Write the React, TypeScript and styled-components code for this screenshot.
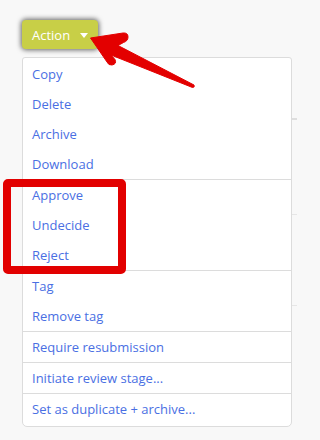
import React from "react";
import styled, { createGlobalStyle } from "styled-components";

const Global = createGlobalStyle`
  html, body { margin: 0; padding: 0; background: #f8f8f8; }
  body { font-family: "Open Sans", "Liberation Sans", sans-serif; }
  * { box-sizing: border-box; }
`;

const Page = styled.div`
  position: relative;
  width: 297px;
  height: 440px;
  overflow: hidden;
  background: #f8f8f8;
`;

const Toolbar = styled.div`
  display: flex;
  padding: 20px 0 0 22px;
`;

const DropdownWrap = styled.div`
  position: relative;
`;

const ActionButton = styled.button`
  display: flex;
  align-items: center;
  gap: 10px;
  height: 29px;
  width: 76px;
  padding: 0 0 0 10px;
  border: none;
  border-radius: 4px;
  background: #c8cf47;
  color: #ffffff;
  font-family: "Open Sans", "Liberation Sans", sans-serif;
  font-size: 13px;
  box-shadow: 0 0 5px 1px rgba(0, 0, 0, 0.6);
  cursor: pointer;
`;

const Caret = styled.span`
  width: 0;
  height: 0;
  border-left: 4.5px solid transparent;
  border-right: 4.5px solid transparent;
  border-top: 5px solid #ffffff;
  margin-top: 1px;
`;

const Menu = styled.ul`
  position: absolute;
  top: 37px;
  left: 0;
  width: 270px;
  margin: 0;
  padding: 1px 0 2px;
  list-style: none;
  background: #ffffff;
  border: 1px solid #dcdcdc;
  border-radius: 3px 3px 5px 5px;
  z-index: 2;
`;

const Group = styled.li`
  padding: 0;
  & + & {
    border-top: 1px solid #dcdcdc;
  }
`;

const Item = styled.div`
  height: 30px;
  line-height: 30px;
  padding-left: 9px;
  font-size: 13px;
  color: #4a6fe3;
  white-space: nowrap;
`;

const Table = styled.div`
  margin-left: 40px;
`;

const Row = styled.div<{ $h: number; $head?: boolean }>`
  height: ${(p) => p.$h}px;
  border-bottom: ${(p) => (p.$head ? "2px solid #dedede" : "1px solid #e6e6e6")};
`;

const RedBox = styled.div`
  position: absolute;
  left: 3px;
  top: 179px;
  width: 123px;
  height: 95px;
  border: 8px solid #e20000;
  border-radius: 5px;
  z-index: 3;
`;

const ArrowSvg = styled.svg`
  position: absolute;
  left: 86px;
  top: 28px;
  width: 112px;
  height: 64px;
  z-index: 4;
  overflow: visible;
`;

const groups = [
  ["Copy", "Delete", "Archive", "Download"],
  ["Approve", "Undecide", "Reject"],
  ["Tag", "Remove tag"],
  ["Require resubmission"],
  ["Initiate review stage..."],
  ["Set as duplicate + archive..."],
];

export default function App() {
  return (
    <>
      <Global />
      <Page>
        <Toolbar>
          <DropdownWrap>
            <ActionButton>
              Action
              <Caret />
            </ActionButton>
            <Menu>
              {groups.map((g, i) => (
                <Group key={i}>
                  {g.map((t) => (
                    <Item key={t}>{t}</Item>
                  ))}
                </Group>
              ))}
            </Menu>
          </DropdownWrap>
        </Toolbar>
        <Table>
          <Row $h={71} $head />
          <Row $h={95} />
          <Row $h={91} />
        </Table>
        <RedBox />
        <ArrowSvg viewBox="86 28 112 64">
          <path
            d="M90.5,38 L123,33 Q128,32.5 128,37 Q128,41 123.5,42.5 L118,45.5 L194,85 Q195,87.5 192.5,87.5 L111,55 L115,59.5 Q117,64 112,65 Q108.5,65.5 107,62 Z"
            fill="#e30000"
            stroke="#e30000"
            strokeWidth="1"
            strokeLinejoin="round"
          />
        </ArrowSvg>
      </Page>
    </>
  );
}
